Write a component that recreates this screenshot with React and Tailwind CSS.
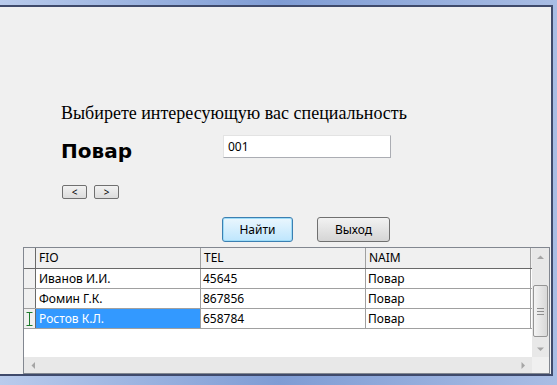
import React from "react";

const rows = [
  { fio: "Иванов И.И.", tel: "45645", naim: "Повар" },
  { fio: "Фомин Г.К.", tel: "867856", naim: "Повар" },
  { fio: "Ростов К.Л.", tel: "658784", naim: "Повар", selected: true },
];

const ui = { fontFamily: '"Noto Sans", "Liberation Sans", sans-serif' };

const IBeam = () => (
  <svg width="7" height="14" viewBox="0 0 7 14" className="block">
    <path d="M0.5 0.5h6M3.5 0.5v13M0.5 13.5h6" stroke="#1d7a2c" strokeWidth="1" fill="none" />
  </svg>
);

const Arrow = ({ dir }) => {
  const d = {
    up: "M0 4 L3.5 0.5 L7 4 Z",
    down: "M0 0.5 L3.5 4 L7 0.5 Z",
    left: "M4 0 L0.5 3.5 L4 7 Z",
    right: "M0.5 0 L4 3.5 L0.5 7 Z",
  }[dir];
  const vertical = dir === "up" || dir === "down";
  return (
    <svg width={vertical ? 7 : 4} height={vertical ? 4 : 7} viewBox={vertical ? "0 0 7 4" : "0 0 4 7"}>
      <path d={d} fill="#a5a5a5" />
    </svg>
  );
};

export default function App() {
  return (
    <div className="w-[557px] h-[385px] overflow-hidden bg-gradient-to-r from-[#b9cbec] via-[#7f9cd4] to-[#a9bde4] flex flex-col">
      <div className="mt-[5px] mr-[4px] h-[371px] bg-[#f0f0f0] border-t-2 border-r-2 border-b-2 border-[#3f4a6b] flex flex-col">
        {/* title */}
        <div className="mt-[96px] pl-[61px] h-[20px] leading-[20px] text-[18px] text-black whitespace-nowrap" style={{ fontFamily: '"Liberation Serif", serif' }}>
          Выбирете интересующую вас специальность
        </div>

        {/* specialty + code */}
        <div className="mt-[12px] pl-[61px] h-[23px] flex items-start">
          <div className="w-[162px] mt-[4px] h-[19px] leading-[24px] text-[20px] font-bold text-black" style={{ fontFamily: '"DejaVu Sans", "Liberation Sans", sans-serif' }}>
            Повар
          </div>
          <div className="w-[168px] h-[23px] bg-white border border-[#abadb3] border-t-[#e3e3e3] border-l-[#e3e3e3] text-[12px] leading-[21px] pl-[4px] text-black" style={ui}>
            001
          </div>
        </div>

        {/* navigation */}
        <div className="mt-[27px] pl-[62px] flex gap-[7px]">
          {["<", ">"].map((c) => (
            <div key={c} className="w-[25px] h-[14px] rounded-[2px] border border-[#707070] bg-gradient-to-b from-[#f2f2f2] to-[#dcdcdc] text-[10px] leading-[12px] text-center text-black" style={ui}>
              {c}
            </div>
          ))}
        </div>

        {/* actions */}
        <div className="mt-[18px] pl-[222px] flex gap-[24px]">
          <div className="w-[71px] h-[25px] rounded-[3px] border border-[#3c7fb1] bg-gradient-to-b from-[#eaf6fd] to-[#bee6fd] shadow-[inset_0_0_0_1px_#9ddcf8] text-[12px] leading-[23px] text-center text-black" style={ui}>
            Найти
          </div>
          <div className="w-[73px] h-[25px] rounded-[3px] border border-[#707070] bg-gradient-to-b from-[#f2f2f2] to-[#d5d5d5] text-[12px] leading-[23px] text-center text-black" style={ui}>
            Выход
          </div>
        </div>

        {/* grid */}
        <div className="mt-[5px] ml-[23px] w-[527px] flex-1 border border-[#828790] bg-white flex text-[12px] text-black" style={ui}>
          <div className="flex-1 flex flex-col">
            <div className="flex-1 flex flex-col">
              <div className="flex h-[21px] bg-[#f0f0f0] border-b border-[#696969]">
                <div className="w-[12px] border-r border-[#696969]" />
                {["FIO", "TEL", "NAIM"].map((h) => (
                  <div key={h} className="w-[165px] border-r border-[#a0a0a0] pl-[3px] leading-[20px]">
                    {h}
                  </div>
                ))}
              </div>
              {rows.map((r) => (
                <div key={r.fio} className="flex h-[20px] border-b border-[#a0a0a0]">
                  <div className="w-[12px] bg-[#f0f0f0] border-r border-[#696969] flex items-center justify-center">
                    {r.selected && <IBeam />}
                  </div>
                  <div className={`w-[165px] border-r border-[#a0a0a0] pl-[3px] leading-[19px] ${r.selected ? "bg-[#3399ff] text-white" : ""}`}>
                    {r.fio}
                  </div>
                  <div className="w-[165px] border-r border-[#a0a0a0] pl-[2px] leading-[19px]">{r.tel}</div>
                  <div className="w-[165px] border-r border-[#a0a0a0] pl-[2px] leading-[19px]">{r.naim}</div>
                </div>
              ))}
            </div>
            <div className="h-[16px] bg-[#e8e8e8] flex items-center justify-between px-[7px]">
              <Arrow dir="left" />
              <Arrow dir="right" />
            </div>
          </div>
          <div className="w-[17px] flex flex-col bg-[#e8e8e8]">
            <div className="h-[17px] flex items-center justify-center">
              <Arrow dir="up" />
            </div>
            <div className="flex-1 flex flex-col pt-[20px] pb-[3px]">
              <div className="mx-[1px] h-[52px] rounded-[2px] border border-[#959595] bg-gradient-to-r from-[#f3f3f3] to-[#d8d8d8] flex flex-col items-center justify-center gap-[2px]">
                <div className="w-[7px] h-px bg-[#8e8e8e]" />
                <div className="w-[7px] h-px bg-[#8e8e8e]" />
                <div className="w-[7px] h-px bg-[#8e8e8e]" />
              </div>
            </div>
            <div className="h-[17px] flex items-center justify-center">
              <Arrow dir="down" />
            </div>
            <div className="h-[16px] bg-[#f0f0f0]" />
          </div>
        </div>
      </div>
    </div>
  );
}
